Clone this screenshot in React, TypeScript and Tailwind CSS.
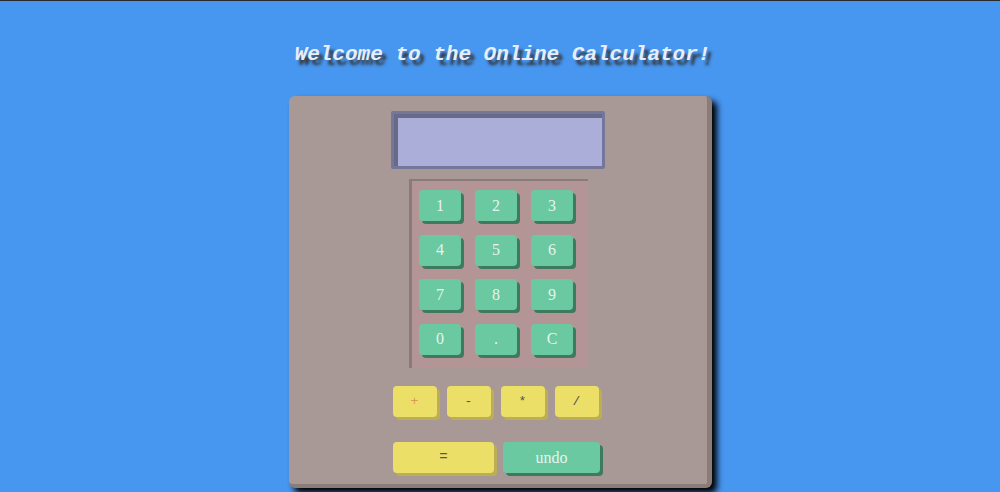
const digits = ["1", "2", "3", "4", "5", "6", "7", "8", "9", "0", ".", "C"];
const ops = ["+", "-", "*", "/"];

export default function App() {
  return (
    <div className="min-h-screen bg-[#4796f0] border-t border-[#2a2a2a] flex flex-col items-center overflow-hidden">
      <h1 className="mt-[41px] ml-[5px] h-[26px] leading-[26px] text-[21px] font-bold italic text-[#e6eef9] [font-family:'Liberation_Mono',monospace] [text-shadow:4px_5px_3px_#333]">
        Welcome to the Online Calculator!
      </h1>

      <div className="mt-[28px] w-[423px] h-[392px] rounded-md bg-[#a89996] border-r-[5px] border-b-[4px] border-[#8b7c79] shadow-[5px_5px_6px_#000] flex flex-col items-center pt-[15px]">
        {/* Display */}
        <div className="w-[214px] h-[58px] bg-[#aaaed8] border-[3px] border-[#74779a] rounded-[2px] shadow-[inset_4px_4px_0_#686b88]" />

        {/* Keypad */}
        <div className="mt-[10px] ml-[2px] w-[179px] h-[189px] bg-[#b49595] border-l-[3px] border-t-2 border-[#8b7b78] pl-[7px] pt-[9px]">
          <div className="grid grid-cols-[repeat(3,42px)] gap-x-[14px] gap-y-[13.5px]">
            {digits.map((d) => (
              <button
                key={d}
                className="h-[31px] rounded bg-[#6ac9a0] shadow-[3px_3px_0_#3f7a60] text-[16px] text-[#e6f4ee] [font-family:'Liberation_Serif',serif]"
              >
                {d}
              </button>
            ))}
          </div>
        </div>

        {/* Operators */}
        <div className="mt-[18px] mr-[4px] flex gap-[10px]">
          {ops.map((o) => (
            <button
              key={o}
              className={`w-[44px] h-[31px] rounded bg-[#ebdf68] shadow-[3px_3px_0_#bcae55] text-[13px] [font-family:'Liberation_Mono',monospace] ${
                o === "+" ? "text-[#d99a55]" : "text-[#555]"
              }`}
            >
              {o}
            </button>
          ))}
        </div>

        {/* Equals / undo */}
        <div className="mt-[25px] mr-[2px] flex gap-[9px]">
          <button className="w-[101px] h-[31px] rounded bg-[#ebdf68] shadow-[3px_3px_0_#bcae55] text-[14px] text-[#555] [font-family:'Liberation_Mono',monospace]">
            =
          </button>
          <button className="w-[97px] h-[31px] rounded bg-[#6ac9a0] shadow-[3px_3px_0_#3f7a60] text-[16px] text-[#e6f4ee] [font-family:'Liberation_Serif',serif]">
            undo
          </button>
        </div>
      </div>
    </div>
  );
}
